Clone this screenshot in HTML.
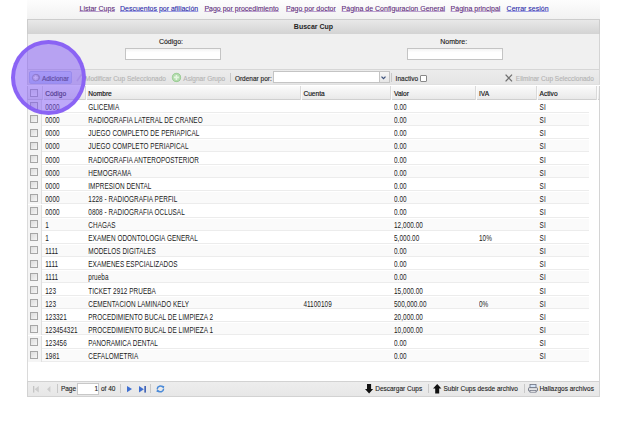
<!DOCTYPE html><html><head><meta charset="utf-8"><style>
*{box-sizing:border-box}
html,body{margin:0;padding:0;width:635px;height:441px;overflow:hidden;background:#fff;font-family:"Liberation Sans",sans-serif;}
.a{position:absolute;white-space:nowrap}
#links{left:27px;top:0;width:573px;height:19.5px;background:linear-gradient(#fdfdfd,#f1f1f1)}
.lk{position:absolute;top:5.2px;font-size:7px;text-decoration:underline;text-underline-offset:0.4px;text-decoration-thickness:0.8px;line-height:8px;-webkit-text-stroke:0.1px currentColor}
.v{color:#5e2c7c;text-decoration-color:rgba(140,90,175,0.55)}
.b{color:#2a2aaa;text-decoration-color:rgba(90,90,215,0.55)}
#hdr{left:27px;top:19.3px;width:573px;height:14.7px;background:linear-gradient(#e8e8e8,#d3d3d3);border:1px solid #cdcdcd;border-bottom:none}
#hdrt{left:27px;width:573px;top:23.2px;text-align:center;font-size:7px;font-weight:bold;color:#262626;line-height:8px}
#form{left:27px;top:34px;width:573px;height:34.6px;background:#f0f0f0;border-left:1px solid #d4d4d4;border-right:1px solid #d4d4d4}
.lbl{position:absolute;top:37.6px;font-size:7px;color:#1a1a1a;line-height:8px;text-align:center;-webkit-text-stroke:0.12px currentColor}
.inp{position:absolute;top:48.4px;height:12px;background:linear-gradient(#f4f4f4,#fff 35%);border:1px solid #c4c4c4}
#tb{left:27px;top:68.9px;width:573px;height:16.6px;background:linear-gradient(#ececec,#e5e5e5);border:1px solid #d6d6d6;border-bottom-color:#e0e0e0}
.tt{position:absolute;font-size:6.5px;line-height:8px;top:74.5px;-webkit-text-stroke:0.12px currentColor}
.dis{color:#b4b4b4}
#ghdr{left:27px;top:85.5px;width:573px;height:14.3px;background:linear-gradient(#fbfbfb,#e9e9e9);border-left:1px solid #d0d0d0;border-right:1px solid #d0d0d0;border-bottom:1px solid #cfcfcf}
.sep{position:absolute;top:86px;width:1px;height:13.5px;background:#dadada;box-shadow:1px 0 0 #fbfbfb}
.ht{position:absolute;top:89.9px;font-size:6.6px;color:#111;line-height:8px;-webkit-text-stroke:0.15px #111}
#body{left:27px;top:99.8px;width:573px;height:281px;background:#fff;border-left:1px solid #dadada;border-right:1px solid #d4d4d4}
.row{position:absolute;left:27.5px;width:561px;height:13.09px;border-top:1px solid #fff;border-bottom:1px solid #ececec}
.alt{background:#fafafa}
.chk{position:absolute;left:28px;width:13.5px;background:#f5f5f5;border-right:1px solid #e0e0e0}
.cb{position:absolute;width:8px;height:8px;border:1px solid #a6a6a6;background:linear-gradient(135deg,#dcdcdc,#f6f6f6)}
.ct{position:absolute;font-size:6.4px;letter-spacing:0.05px;color:#1a1a1a;line-height:8px;transform:scaleY(1.3);transform-origin:0 80%}
#foot{left:27px;top:380.5px;width:573px;height:16px;background:linear-gradient(#ededed,#e7e7e7);border:1px solid #d2d2d2}
.ft{position:absolute;top:385.1px;font-size:6.5px;color:#222;line-height:8px;-webkit-text-stroke:0.1px currentColor}
.tsep{position:absolute;width:1px;background:#c8c8c8}
#circ{position:absolute;left:11.4px;top:39.5px;width:75px;height:75.2px;border-radius:50%;background:rgba(132,92,244,0.53);border:4.2px solid rgba(130,88,244,0.86)}
</style></head><body>
<div id="links" class="a"></div>
<span class="lk v" style="left:79.5px">Listar Cups</span>
<span class="lk b" style="left:120.0px">Descuentos por afiliación</span>
<span class="lk v" style="left:204.4px">Pago por procedimiento</span>
<span class="lk v" style="left:286.0px">Pago por doctor</span>
<span class="lk v" style="left:341.6px">Página de Configuracion General</span>
<span class="lk v" style="left:450.6px">Página principal</span>
<span class="lk b" style="left:506.6px">Cerrar sesión</span>
<div id="hdr" class="a"></div><div id="hdrt" class="a">Buscar Cup</div>
<div id="form" class="a"></div>
<span class="lbl" style="left:151px;width:40px">Código:</span>
<span class="lbl" style="left:433.7px;width:40px">Nombre:</span>
<div class="inp" style="left:124.5px;width:96px"></div>
<div class="inp" style="left:407px;width:96px"></div>
<div id="tb" class="a"></div>
<div class="a" style="left:29px;top:71.1px;width:42.5px;height:12.6px;border:1px solid #b0c0e6;background:linear-gradient(#cfdcfa,#b5c8f4);border-radius:2px"></div>
<div class="a" style="left:32.5px;top:74.3px;width:7px;height:7px;border-radius:50%;background:#b8b8b8;border:0.6px solid #999"></div>
<span class="tt" style="left:41.9px;color:#333">Adicionar</span>
<span class="tt dis" style="left:85px">Modificar Cup Seleccionado</span>
<div class="a" style="left:172.2px;top:73.4px;width:8.8px;height:8.8px;border-radius:50%;background:#9ed39a;border:0.6px solid #7fbf7a"></div>
<span class="tt dis" style="left:183.3px">Asignar Grupo</span>
<div class="tsep" style="left:230.3px;top:73px;height:9px"></div>
<span class="tt" style="left:234.9px;color:#222">Ordenar por:</span>
<div class="a" style="left:273.1px;top:71.3px;width:116.5px;height:11.6px;background:#fff;border:1px solid #c4c4c4"></div>
<div class="a" style="left:379px;top:71.3px;width:10.6px;height:11.6px;background:linear-gradient(#f6f6f6,#e6e6e6);border:1px solid #c4c4c4"></div>
<div class="tsep" style="left:391.3px;top:73px;height:9px"></div>
<span class="tt" style="left:395.6px;color:#222">Inactivo</span>
<div class="a" style="left:419.6px;top:74.8px;width:7px;height:7px;background:#fff;border:1px solid #888;border-radius:1px"></div>
<span class="tt dis" style="left:515.8px">Eliminar Cup Seleccionado</span>
<div id="ghdr" class="a"></div>
<div class="sep" style="left:41.5px"></div>
<div class="sep" style="left:84.8px"></div>
<div class="sep" style="left:299.8px"></div>
<div class="sep" style="left:390.4px"></div>
<div class="sep" style="left:475.4px"></div>
<div class="sep" style="left:535.9px"></div>
<div class="sep" style="left:596.3px"></div>
<span class="ht" style="left:45.2px">Código</span>
<span class="ht" style="left:88.3px">Nombre</span>
<span class="ht" style="left:303.4px">Cuenta</span>
<span class="ht" style="left:394.0px">Valor</span>
<span class="ht" style="left:479.0px">IVA</span>
<span class="ht" style="left:539.6px">Activo</span>
<div class="a" style="left:30px;top:88.6px;width:8px;height:8px;border:1px solid #a8a8a8;background:linear-gradient(#e6e6e6,#fafafa)"></div>
<div id="body" class="a"></div>
<div class="row" style="top:99.70px"></div>
<div class="chk a" style="top:99.70px;height:13.10px"></div>
<div class="cb" style="left:30px;top:102.30px"></div>
<span class="ct" style="left:45.2px;top:104.10px">0000</span>
<span class="ct" style="left:88.3px;top:104.10px">GLICEMIA</span>
<span class="ct" style="left:394.0px;top:104.10px">0.00</span>
<span class="ct" style="left:539.6px;top:104.10px">SI</span>
<div class="row alt" style="top:112.80px"></div>
<div class="chk a" style="top:112.80px;height:13.10px"></div>
<div class="cb" style="left:30px;top:115.40px"></div>
<span class="ct" style="left:45.2px;top:117.20px">0000</span>
<span class="ct" style="left:88.3px;top:117.20px">RADIOGRAFIA LATERAL DE CRANEO</span>
<span class="ct" style="left:394.0px;top:117.20px">0.00</span>
<span class="ct" style="left:539.6px;top:117.20px">SI</span>
<div class="row" style="top:125.90px"></div>
<div class="chk a" style="top:125.90px;height:13.10px"></div>
<div class="cb" style="left:30px;top:128.50px"></div>
<span class="ct" style="left:45.2px;top:130.30px">0000</span>
<span class="ct" style="left:88.3px;top:130.30px">JUEGO COMPLETO DE PERIAPICAL</span>
<span class="ct" style="left:394.0px;top:130.30px">0.00</span>
<span class="ct" style="left:539.6px;top:130.30px">SI</span>
<div class="row alt" style="top:139.00px"></div>
<div class="chk a" style="top:139.00px;height:13.10px"></div>
<div class="cb" style="left:30px;top:141.60px"></div>
<span class="ct" style="left:45.2px;top:143.40px">0000</span>
<span class="ct" style="left:88.3px;top:143.40px">JUEGO COMPLETO PERIAPICAL</span>
<span class="ct" style="left:394.0px;top:143.40px">0.00</span>
<span class="ct" style="left:539.6px;top:143.40px">SI</span>
<div class="row" style="top:152.10px"></div>
<div class="chk a" style="top:152.10px;height:13.10px"></div>
<div class="cb" style="left:30px;top:154.70px"></div>
<span class="ct" style="left:45.2px;top:156.50px">0000</span>
<span class="ct" style="left:88.3px;top:156.50px">RADIOGRAFIA ANTEROPOSTERIOR</span>
<span class="ct" style="left:394.0px;top:156.50px">0.00</span>
<span class="ct" style="left:539.6px;top:156.50px">SI</span>
<div class="row alt" style="top:165.20px"></div>
<div class="chk a" style="top:165.20px;height:13.10px"></div>
<div class="cb" style="left:30px;top:167.80px"></div>
<span class="ct" style="left:45.2px;top:169.60px">0000</span>
<span class="ct" style="left:88.3px;top:169.60px">HEMOGRAMA</span>
<span class="ct" style="left:394.0px;top:169.60px">0.00</span>
<span class="ct" style="left:539.6px;top:169.60px">SI</span>
<div class="row" style="top:178.30px"></div>
<div class="chk a" style="top:178.30px;height:13.10px"></div>
<div class="cb" style="left:30px;top:180.90px"></div>
<span class="ct" style="left:45.2px;top:182.70px">0000</span>
<span class="ct" style="left:88.3px;top:182.70px">IMPRESION DENTAL</span>
<span class="ct" style="left:394.0px;top:182.70px">0.00</span>
<span class="ct" style="left:539.6px;top:182.70px">SI</span>
<div class="row alt" style="top:191.40px"></div>
<div class="chk a" style="top:191.40px;height:13.10px"></div>
<div class="cb" style="left:30px;top:194.00px"></div>
<span class="ct" style="left:45.2px;top:195.80px">0000</span>
<span class="ct" style="left:88.3px;top:195.80px">1228 - RADIOGRAFIA PERFIL</span>
<span class="ct" style="left:394.0px;top:195.80px">0.00</span>
<span class="ct" style="left:539.6px;top:195.80px">SI</span>
<div class="row" style="top:204.50px"></div>
<div class="chk a" style="top:204.50px;height:13.10px"></div>
<div class="cb" style="left:30px;top:207.10px"></div>
<span class="ct" style="left:45.2px;top:208.90px">0000</span>
<span class="ct" style="left:88.3px;top:208.90px">0808 - RADIOGRAFIA OCLUSAL</span>
<span class="ct" style="left:394.0px;top:208.90px">0.00</span>
<span class="ct" style="left:539.6px;top:208.90px">SI</span>
<div class="row alt" style="top:217.60px"></div>
<div class="chk a" style="top:217.60px;height:13.10px"></div>
<div class="cb" style="left:30px;top:220.20px"></div>
<span class="ct" style="left:45.2px;top:222.00px">1</span>
<span class="ct" style="left:88.3px;top:222.00px">CHAGAS</span>
<span class="ct" style="left:394.0px;top:222.00px">12,000.00</span>
<span class="ct" style="left:539.6px;top:222.00px">SI</span>
<div class="row" style="top:230.70px"></div>
<div class="chk a" style="top:230.70px;height:13.10px"></div>
<div class="cb" style="left:30px;top:233.30px"></div>
<span class="ct" style="left:45.2px;top:235.10px">1</span>
<span class="ct" style="left:88.3px;top:235.10px">EXAMEN ODONTOLOGIA GENERAL</span>
<span class="ct" style="left:394.0px;top:235.10px">5,000.00</span>
<span class="ct" style="left:479.0px;top:235.10px">10%</span>
<span class="ct" style="left:539.6px;top:235.10px">SI</span>
<div class="row alt" style="top:243.80px"></div>
<div class="chk a" style="top:243.80px;height:13.10px"></div>
<div class="cb" style="left:30px;top:246.40px"></div>
<span class="ct" style="left:45.2px;top:248.20px">1111</span>
<span class="ct" style="left:88.3px;top:248.20px">MODELOS DIGITALES</span>
<span class="ct" style="left:394.0px;top:248.20px">0.00</span>
<span class="ct" style="left:539.6px;top:248.20px">SI</span>
<div class="row" style="top:256.90px"></div>
<div class="chk a" style="top:256.90px;height:13.10px"></div>
<div class="cb" style="left:30px;top:259.50px"></div>
<span class="ct" style="left:45.2px;top:261.30px">1111</span>
<span class="ct" style="left:88.3px;top:261.30px">EXAMENES ESPCIALIZADOS</span>
<span class="ct" style="left:394.0px;top:261.30px">0.00</span>
<span class="ct" style="left:539.6px;top:261.30px">SI</span>
<div class="row alt" style="top:270.00px"></div>
<div class="chk a" style="top:270.00px;height:13.10px"></div>
<div class="cb" style="left:30px;top:272.60px"></div>
<span class="ct" style="left:45.2px;top:274.40px">1111</span>
<span class="ct" style="left:88.3px;top:274.40px">prueba</span>
<span class="ct" style="left:394.0px;top:274.40px">0.00</span>
<span class="ct" style="left:539.6px;top:274.40px">SI</span>
<div class="row" style="top:283.10px"></div>
<div class="chk a" style="top:283.10px;height:13.10px"></div>
<div class="cb" style="left:30px;top:285.70px"></div>
<span class="ct" style="left:45.2px;top:287.50px">123</span>
<span class="ct" style="left:88.3px;top:287.50px">TICKET 2912 PRUEBA</span>
<span class="ct" style="left:394.0px;top:287.50px">15,000.00</span>
<span class="ct" style="left:539.6px;top:287.50px">SI</span>
<div class="row alt" style="top:296.20px"></div>
<div class="chk a" style="top:296.20px;height:13.10px"></div>
<div class="cb" style="left:30px;top:298.80px"></div>
<span class="ct" style="left:45.2px;top:300.60px">123</span>
<span class="ct" style="left:88.3px;top:300.60px">CEMENTACION LAMINADO KELY</span>
<span class="ct" style="left:303.4px;top:300.60px">41100109</span>
<span class="ct" style="left:394.0px;top:300.60px">500,000.00</span>
<span class="ct" style="left:479.0px;top:300.60px">0%</span>
<span class="ct" style="left:539.6px;top:300.60px">SI</span>
<div class="row" style="top:309.30px"></div>
<div class="chk a" style="top:309.30px;height:13.10px"></div>
<div class="cb" style="left:30px;top:311.90px"></div>
<span class="ct" style="left:45.2px;top:313.70px">123321</span>
<span class="ct" style="left:88.3px;top:313.70px">PROCEDIMIENTO BUCAL DE LIMPIEZA 2</span>
<span class="ct" style="left:394.0px;top:313.70px">20,000.00</span>
<span class="ct" style="left:539.6px;top:313.70px">SI</span>
<div class="row alt" style="top:322.40px"></div>
<div class="chk a" style="top:322.40px;height:13.10px"></div>
<div class="cb" style="left:30px;top:325.00px"></div>
<span class="ct" style="left:45.2px;top:326.80px">123454321</span>
<span class="ct" style="left:88.3px;top:326.80px">PROCEDIMIENTO BUCAL DE LIMPIEZA 1</span>
<span class="ct" style="left:394.0px;top:326.80px">10,000.00</span>
<span class="ct" style="left:539.6px;top:326.80px">SI</span>
<div class="row" style="top:335.50px"></div>
<div class="chk a" style="top:335.50px;height:13.10px"></div>
<div class="cb" style="left:30px;top:338.10px"></div>
<span class="ct" style="left:45.2px;top:339.90px">123456</span>
<span class="ct" style="left:88.3px;top:339.90px">PANORAMICA DENTAL</span>
<span class="ct" style="left:394.0px;top:339.90px">0.00</span>
<span class="ct" style="left:539.6px;top:339.90px">SI</span>
<div class="row alt" style="top:348.60px"></div>
<div class="chk a" style="top:348.60px;height:13.10px"></div>
<div class="cb" style="left:30px;top:351.20px"></div>
<span class="ct" style="left:45.2px;top:353.00px">1981</span>
<span class="ct" style="left:88.3px;top:353.00px">CEFALOMETRIA</span>
<span class="ct" style="left:394.0px;top:353.00px">0.00</span>
<span class="ct" style="left:539.6px;top:353.00px">SI</span>
<div id="foot" class="a"></div>
<span class="ft" style="left:60.9px">Page</span>
<div class="a" style="left:77.4px;top:383px;width:22px;height:11.8px;background:#fff;border:1px solid #c8c8c8"></div>
<span class="ft" style="left:94.5px">1</span>
<span class="ft" style="left:101px">of 40</span>
<div class="tsep" style="left:57.4px;top:384px;height:9px"></div>
<div class="tsep" style="left:120px;top:384px;height:9px"></div>
<div class="tsep" style="left:150.2px;top:384px;height:9px"></div>
<div class="tsep" style="left:427.7px;top:384px;height:9px"></div>
<div class="tsep" style="left:524px;top:384px;height:9px"></div>
<span class="ft" style="left:375.2px">Descargar Cups</span>
<span class="ft" style="left:443.5px">Subir Cups desde archivo</span>
<span class="ft" style="left:539.4px">Hallazgos archivos</span>
<svg class="a" style="left:31.9px;top:74.1px;width:7.4px;height:7.4px;overflow:visible" viewBox="0 0 7.4 7.4"><circle cx="3.7" cy="3.7" r="3.3" fill="#dcdcdc" stroke="#8f8f9a" stroke-width="0.8"/><path d="M3.7 1.8V5.6M1.8 3.7H5.6" stroke="#ffffff" stroke-width="1.2"/></svg>
<svg class="a" style="left:75.5px;top:73px;width:6.5px;height:9px;overflow:visible" viewBox="0 0 6.5 9"><path d="M1 8 L5.5 1.5" stroke="#d0c8d8" stroke-width="1.6"/></svg>
<svg class="a" style="left:172.1px;top:73.4px;width:8.8px;height:8.8px;overflow:visible" viewBox="0 0 8.8 8.8"><circle cx="4.4" cy="4.4" r="4.2" fill="#b4dcae" stroke="#9acb93" stroke-width="0.5"/><path d="M4.4 1.9V6.9M1.9 4.4H6.9" stroke="#e6f6e2" stroke-width="1.6"/></svg>
<svg class="a" style="left:381px;top:75.6px;width:5px;height:3.5px;overflow:visible" viewBox="0 0 5 3.5"><path d="M0.5 0.6 L2.5 2.7 L4.5 0.6" fill="none" stroke="#3a4f7a" stroke-width="1.2"/></svg>
<svg class="a" style="left:504.6px;top:73.6px;width:7.6px;height:8px;overflow:visible" viewBox="0 0 7.6 8"><path d="M0.6 0.6 L7 7.4 M7 0.6 L0.6 7.4" stroke="#6f6f6f" stroke-width="1.3"/></svg>
<svg class="a" style="left:33.2px;top:385.6px;width:5.8px;height:6.6px;overflow:visible" viewBox="0 0 5.8 6.6"><rect x="0" y="0" width="1.3" height="6.6" fill="#c4c4c4"/><path d="M5.8 0 L1.6 3.3 L5.8 6.6Z" fill="#cdcdcd"/></svg>
<svg class="a" style="left:46.9px;top:385.6px;width:3.4px;height:6.6px;overflow:visible" viewBox="0 0 3.4 6.6"><path d="M3.4 0 L0 3.3 L3.4 6.6Z" fill="#cdcdcd"/></svg>
<svg class="a" style="left:126.5px;top:385.8px;width:5px;height:6.2px;overflow:visible" viewBox="0 0 5 6.2"><path d="M0 0 L5 3.1 L0 6.2Z" fill="#3f6fd1"/></svg>
<svg class="a" style="left:138.5px;top:385.6px;width:6.9px;height:6.6px;overflow:visible" viewBox="0 0 6.9 6.6"><path d="M0 0 L4.9 3.3 L0 6.6Z" fill="#3f6fd1"/><rect x="5.4" y="0" width="1.5" height="6.6" fill="#2f55b0"/></svg>
<svg class="a" style="left:155.5px;top:385px;width:8.8px;height:7.9px;overflow:visible" viewBox="0 0 8.8 7.9"><path d="M1.2 4.2 A3.2 3.2 0 0 1 7 2.4" fill="none" stroke="#4a8ad8" stroke-width="1.5"/><path d="M7.6 3.7 A3.2 3.2 0 0 1 1.8 5.5" fill="none" stroke="#4a8ad8" stroke-width="1.5"/><path d="M5.6 0.6 L8.4 1.2 L7.6 3.8Z" fill="#4a8ad8"/><path d="M3.2 7.3 L0.4 6.7 L1.2 4.1Z" fill="#4a8ad8"/></svg>
<svg class="a" style="left:364.9px;top:384px;width:8.2px;height:9.4px;overflow:visible" viewBox="0 0 8.2 9.4"><path d="M2 0 H6.1 V5.1 H8.2 L4.1 9.4 L0 5.1 H2 Z" fill="#111"/></svg>
<svg class="a" style="left:432.7px;top:384px;width:8.4px;height:9.4px;overflow:visible" viewBox="0 0 8.4 9.4"><path d="M4.2 0 L8.4 4.4 H6.2 V9.4 H2.2 V4.4 H0 Z" fill="#111"/></svg>
<svg class="a" style="left:528px;top:384.2px;width:10px;height:8.7px;overflow:visible" viewBox="0 0 10 8.7"><rect x="2" y="0.5" width="6" height="3.6" fill="#d8e6f8" stroke="#6a7080" stroke-width="0.8"/><rect x="0.5" y="3.6" width="9" height="3.6" rx="1" fill="#e4e4e4" stroke="#6a7080" stroke-width="0.9"/><rect x="2" y="6.4" width="6" height="1.8" fill="#f4f4f4" stroke="#6a7080" stroke-width="0.7"/></svg>
<div id="circ"></div>
</body></html>
